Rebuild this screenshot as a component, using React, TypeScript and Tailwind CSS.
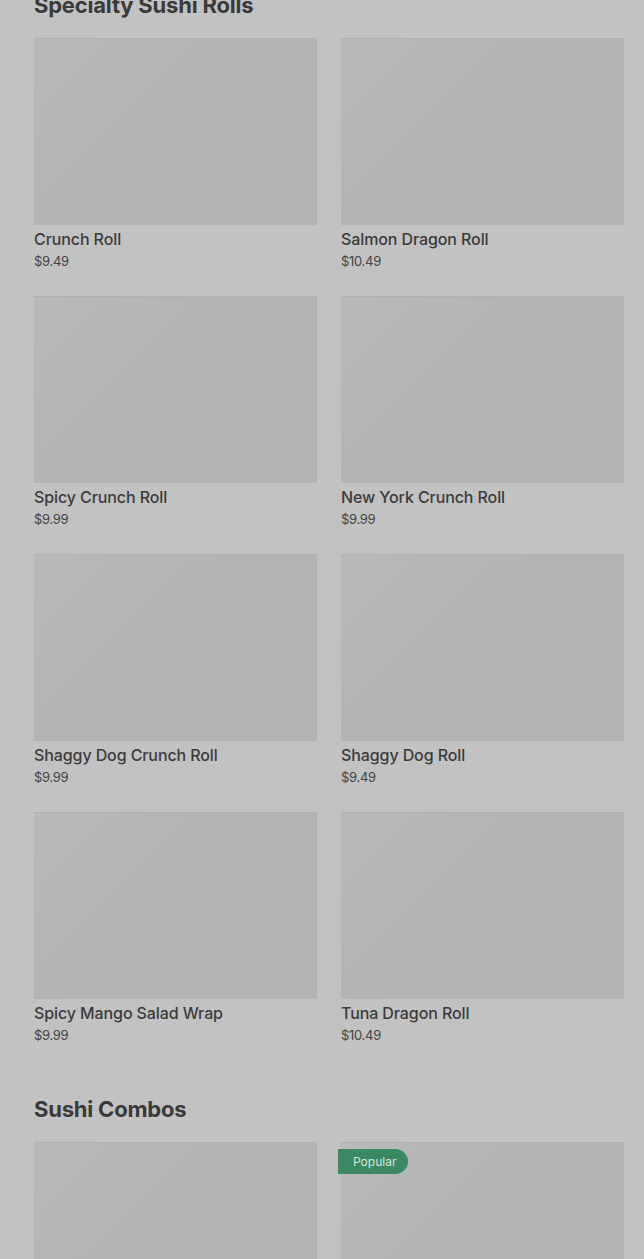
const sections = [
  {
    title: "Specialty Sushi Rolls",
    items: [
      { name: "Crunch Roll", price: "$9.49" },
      { name: "Salmon Dragon Roll", price: "$10.49" },
      { name: "Spicy Crunch Roll", price: "$9.99" },
      { name: "New York Crunch Roll", price: "$9.99" },
      { name: "Shaggy Dog Crunch Roll", price: "$9.99" },
      { name: "Shaggy Dog Roll", price: "$9.49" },
      { name: "Spicy Mango Salad Wrap", price: "$9.99" },
      { name: "Tuna Dragon Roll", price: "$10.49" },
    ],
  },
  {
    title: "Sushi Combos",
    // names below the fold aren't visible in the shot
    items: [{ name: "" }, { name: "", badge: "Popular" }],
  },
]

type Item = { name: string; price?: string; badge?: string }

function MenuCard({ item }: { item: Item }) {
  return (
    <div className="flex flex-col">
      <div className="relative h-[187px] bg-[linear-gradient(135deg,#b9b9b9_0%,#b4b4b4_40%,#b3b3b3_100%)] border-t border-[#b0b0b0]">
        {item.badge && (
          <span className="absolute left-[-3px] top-[6px] flex h-[25px] items-center rounded-r-full bg-[#3b8962] pl-[15px] pr-[12px] text-[12px] leading-none text-[#d6e4dc]">
            {item.badge}
          </span>
        )}
      </div>
      {item.name && (
        <>
          <div className="mt-[3px] text-[16px] font-medium leading-[22px] tracking-[-0.1px] text-[#3b3b3b]">{item.name}</div>
          <div className="mt-[2px] text-[13px] leading-[18px] tracking-[-0.3px] text-[#444]">{item.price}</div>
        </>
      )}
    </div>
  )
}

export default function App() {
  return (
    <div className="h-screen overflow-hidden bg-[#c2c2c2] font-['Inter',sans-serif]">
      <div className="-mt-[9px] pl-[34px] pr-[20px]">
        {sections.map((section) => (
          <section key={section.title} className="mb-[51px]">
            <h2 className="text-[22px] font-bold leading-[28px] tracking-[-0.2px] text-[#3a3a3a]">{section.title}</h2>
            <div className="mt-[19px] grid grid-cols-2 gap-x-[24px] gap-y-[26px]">
              {section.items.map((item, i) => (
                <MenuCard key={item.name || i} item={item} />
              ))}
            </div>
          </section>
        ))}
      </div>
    </div>
  )
}
